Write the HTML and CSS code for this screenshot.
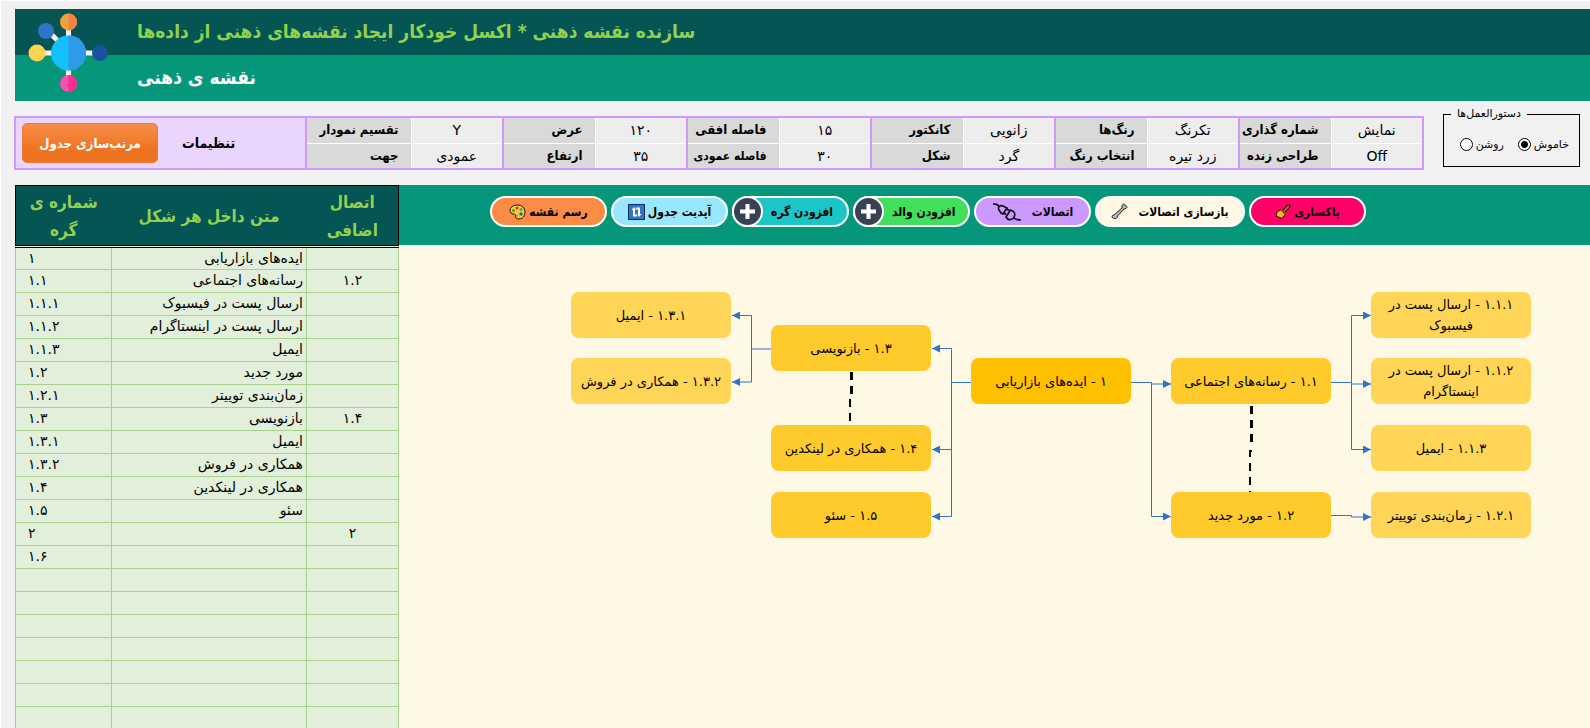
FILE: index.html
```html
<!DOCTYPE html>
<html lang="fa">
<head>
<meta charset="utf-8">
<title>نقشه ی ذهنی</title>
<link rel="stylesheet" href="styles.css">
</head>
<body>
<div class="sheet">
  <header class="banner">
    <svg class="logo" width="80" height="80" viewBox="0 0 80 80" aria-hidden="true">
      <path d="M40.500 10V70M12 40H72M20 18L34 32" stroke="#f2f2f2" stroke-width="5" fill="none"/>
      <circle cx="40.500" cy="40" r="17.500" fill="#16c0fc"/>
      <path d="M40.500 22.500a17.500 17.500 0 0 1 0 35z" fill="#2e9be8"/>
      <circle cx="40.500" cy="9" r="8.500" fill="#f0a23a"/>
      <path d="M40.500 .5a8.500 8.500 0 0 1 0 17z" fill="#f58442"/>
      <circle cx="18" cy="18" r="8" fill="#3173c6"/>
      <circle cx="9" cy="40" r="8.500" fill="#ffd34f"/>
      <circle cx="72" cy="40" r="8" fill="#17549f"/>
      <circle cx="40.500" cy="70.500" r="8.500" fill="#f84fb4"/>
      <path d="M40.500 62a8.500 8.500 0 0 1 0 17z" fill="#fb2d92"/>
    </svg>
    <h1 class="banner-title" dir="rtl">سازنده نقشه ذهنی * اکسل خودکار ایجاد نقشه‌های ذهنی از داده‌ها</h1>
    <h2 class="banner-subtitle" dir="rtl">نقشه ی ذهنی</h2>
  </header>

  <section class="options">
    <div class="settings-wrap">
      <table class="settings">
        <colgroup>
          <col class="col-main"><col class="col-wide"><col><col><col><col><col><col><col><col><col><col><col>
        </colgroup>
        <tr>
          <td class="settings-main" rowspan="2">
            <div class="settings-head">
              <button class="sort-button" type="button" dir="rtl">مرتب‌سازی جدول</button>
              <strong>تنظیمات</strong>
            </div>
          </td>
          <th>تقسیم نمودار</th><td>Y</td>
          <th>عرض</th><td>۱۲۰</td>
          <th>فاصله افقی</th><td>۱۵</td>
          <th>کانکتور</th><td>زانویی</td>
          <th>رنگ‌ها</th><td>تکرنگ</td>
          <th>شماره گذاری</th><td>نمایش</td>
        </tr>
        <tr>
          <th>جهت</th><td>عمودی</td>
          <th>ارتفاع</th><td>۳۵</td>
          <th class="compact">فاصله عمودی</th><td>۳۰</td>
          <th>شکل</th><td>گرد</td>
          <th>انتخاب رنگ</th><td>زرد تیره</td>
          <th>طراحی زنده</th><td>Off</td>
        </tr>
      </table>
    </div>
    <fieldset class="guides" dir="rtl">
      <legend>دستورالعمل‌ها</legend>
      <label class="radio">خاموش<input type="radio" name="guides" checked></label>
      <label class="radio">روشن<input type="radio" name="guides"></label>
    </fieldset>
  </section>

  <main class="work">
    <table class="data">
      <colgroup><col class="data-id"><col class="data-text"><col class="data-link"></colgroup>
      <thead>
        <tr><th dir="rtl">شماره ی<br>گره</th><th dir="rtl">متن داخل هر شکل</th><th dir="rtl">اتصال<br>اضافی</th></tr>
      </thead>
      <tbody>
        <tr><td>۱</td><td>ایده‌های بازاریابی</td><td></td></tr>
        <tr><td>۱.۱</td><td>رسانه‌های اجتماعی</td><td>۱.۲</td></tr>
        <tr><td>۱.۱.۱</td><td>ارسال پست در فیسبوک</td><td></td></tr>
        <tr><td>۱.۱.۲</td><td>ارسال پست در اینستاگرام</td><td></td></tr>
        <tr><td>۱.۱.۳</td><td>ایمیل</td><td></td></tr>
        <tr><td>۱.۲</td><td>مورد جدید</td><td></td></tr>
        <tr><td>۱.۲.۱</td><td>زمان‌بندی توییتر</td><td></td></tr>
        <tr><td>۱.۳</td><td>بازنویسی</td><td>۱.۴</td></tr>
        <tr><td>۱.۳.۱</td><td>ایمیل</td><td></td></tr>
        <tr><td>۱.۳.۲</td><td>همکاری در فروش</td><td></td></tr>
        <tr><td>۱.۴</td><td>همکاری در لینکدین</td><td></td></tr>
        <tr><td>۱.۵</td><td>سئو</td><td></td></tr>
        <tr><td>۲</td><td></td><td>۲</td></tr>
        <tr><td>۱.۶</td><td></td><td></td></tr>
        <tr><td></td><td></td><td></td></tr>
        <tr><td></td><td></td><td></td></tr>
        <tr><td></td><td></td><td></td></tr>
        <tr><td></td><td></td><td></td></tr>
        <tr><td></td><td></td><td></td></tr>
        <tr><td></td><td></td><td></td></tr>
        <tr><td></td><td></td><td></td></tr>
      </tbody>
    </table>

    <section class="map">
      <nav class="toolbar">
        <button class="pill pill-draw" type="button">
          <svg width="17" height="16" viewBox="0 0 17 16" aria-hidden="true"><path d="M8.500 1C4 1 1 3.500 1 6.500c0 2 1.500 3.500 3.500 3.500 1.500 0 2 .8 2 2 0 2 1.500 3 3.500 3 3.500 0 6-3 6-7s-3-7-7.500-7z" fill="#f8c93a" stroke="#15120a"/><circle cx="8" cy="4" r="1.500" fill="#e3342c"/><circle cx="4.500" cy="6.500" r="1.500" fill="#38a846"/><circle cx="12" cy="5.500" r="1.500" fill="#36b04a"/><circle cx="12" cy="10" r="1.700" fill="#2d61c9"/><circle cx="8.500" cy="11.500" r="1.200" fill="#fa8a45"/></svg>
          <span>رسم نقشه</span>
        </button>
        <button class="pill pill-update" type="button">
          <svg width="17" height="16" viewBox="0 0 17 16" aria-hidden="true"><rect x=".5" y=".5" width="16" height="15" fill="#2f74c8" stroke="#142c58"/><path d="M6 5v6.500h3M8 4.500h3V11" stroke="#fff" stroke-width="2" fill="none"/><path d="M3.500 6L6 3l2 3zM9 10l2 3 2.500-3z" fill="#fff"/></svg>
          <span>آپدیت جدول</span>
        </button>
        <button class="pill pill-node" type="button">
          <svg width="31" height="31" viewBox="0 0 31 31" aria-hidden="true"><circle cx="15.500" cy="15.500" r="14.500" fill="#3a4152" stroke="#fff" stroke-width="2"/><path d="M15.500 8v15M8 15.500h15" stroke="#fff" stroke-width="4"/></svg>
          <span>افزودن گره</span>
        </button>
        <button class="pill pill-parent" type="button">
          <svg width="31" height="31" viewBox="0 0 31 31" aria-hidden="true"><circle cx="15.500" cy="15.500" r="14.500" fill="#3a4152" stroke="#fff" stroke-width="2"/><path d="M15.500 8v15M8 15.500h15" stroke="#fff" stroke-width="4"/></svg>
          <span>افزودن والد</span>
        </button>
        <button class="pill pill-connect" type="button">
          <svg width="30" height="20" viewBox="0 0 30 20" aria-hidden="true"><path d="M1 2c3 0 5 0 6 3M7 8c-1.500-3 1-5 4-4l4 2-4 6c-2-.5-3-2-4-4zM15 7l2 1.500M12 11l2 1.500M18.500 8l-4.500 7c1.500 3 5 3.500 7 1.500s2.500-5 .5-7zM22 16c2 2 4 2 7 2" fill="none" stroke="#15101f" stroke-width="1.700"/></svg>
          <span>اتصالات</span>
        </button>
        <button class="pill pill-rebuild" type="button">
          <svg width="17" height="17" viewBox="0 0 17 17" aria-hidden="true"><path d="M11 2.500c1-2 3-2 3 0 2 0 2.500 2 1 3l-2 .5-6.500 7c0 2-2 3.500-3 2.500C1.500 15.500.5 14 1.500 12.500l2-1L11 5z" fill="#b9b9b9" stroke="#1b1b1b"/></svg>
          <span>بازسازی اتصالات</span>
        </button>
        <button class="pill pill-clear" type="button">
          <svg width="16" height="16" viewBox="0 0 16 16" aria-hidden="true"><path d="M14 2L9 7" stroke="#2a1606" stroke-width="3.500" stroke-linecap="round"/><path d="M14 2L9 7" stroke="#d6833a" stroke-width="1.500"/><path d="M6 5.500L10.500 10 7 14.500 1 12l1-4z" fill="#f4b13c" stroke="#2a1606"/><path d="M6 5.500l4.500 4.500" stroke="#8b4d1c" stroke-width="2"/></svg>
          <span>پاکسازی</span>
        </button>
      </nav>

      <div class="canvas">
        <svg class="wires" width="1191" height="483" viewBox="0 0 1191 483" aria-hidden="true">
          <defs><marker id="arrow" markerWidth="8" markerHeight="8" refX="8" refY="4" orient="auto" markerUnits="userSpaceOnUse"><path d="M0 0l8 4-8 4z" fill="#3173c6"/></marker></defs>
          <g class="wire">
            <path d="M732 137.500h20.500v1.500H772"/>
            <path d="M752.500 137.500V271.500H772"/>
            <path d="M932 137.500h20.500v1.500H972"/>
            <path d="M952.500 137.500V70.500H972"/>
            <path d="M952.500 137.500V204.500H972"/>
            <path d="M932 270.500h20.500v1.500H972"/>
            <path d="M572 137.500H552.500V103.500H533"/>
            <path d="M552.500 137.500V204.500H533"/>
            <path d="M552.500 137.500V271.500H533"/>
            <path d="M372 104H352.500V70.500H333"/>
            <path d="M352.500 104V137H333"/>
          </g>
          <path class="extra" d="M452.500 127v24"/>
          <path class="extra extra-thin" d="M451 154v28"/>
          <path class="extra" d="M852.500 161v38"/>
          <path class="extra extra-thin" d="M853 206H851v44"/>
        </svg>
        <div class="node level-1 x3 y3">۱ - ایده‌های بازاریابی</div>
        <div class="node level-2 x4 y3">۱.۱ - رسانه‌های اجتماعی</div>
        <div class="node level-2 x4 y5">۱.۲ - مورد جدید</div>
        <div class="node level-2 x2 y2">۱.۳ - بازنویسی</div>
        <div class="node level-2 x2 y4">۱.۴ - همکاری در لینکدین</div>
        <div class="node level-2 x2 y5">۱.۵ - سئو</div>
        <div class="node level-3 x5 y1">۱.۱.۱ - ارسال پست در<br>فیسبوک</div>
        <div class="node level-3 x5 y3">۱.۱.۲ - ارسال پست در<br>اینستاگرام</div>
        <div class="node level-3 x5 y4">۱.۱.۳ - ایمیل</div>
        <div class="node level-3 x5 y5">۱.۲.۱ - زمان‌بندی توییتر</div>
        <div class="node level-3 x1 y1">۱.۳.۱ - ایمیل</div>
        <div class="node level-3 x1 y3">۱.۳.۲ - همکاری در فروش</div>
      </div>
    </section>
  </main>
</div>
</body>
</html>
```

FILE: styles.css
```css
* { box-sizing: border-box; }

body {
  margin: 0;
  height: 100vh;
  overflow: hidden;
  background: #fff;
  color: #000;
  font-family: "DejaVu Sans", sans-serif;
  font-size: 14px;
}

h1, h2, th, strong, button {
  font-family: "DejaVu Sans Condensed", "DejaVu Sans", sans-serif;
  font-weight: bold;
}

button { color: inherit; }

.sheet {
  height: 100%;
  margin: 1px 0 0 1px;
  padding: 8px 0 0 14px;
  display: flex;
  flex-direction: column;
  background: #f1f1f1;
}

.banner { position: relative; flex: none; }

.logo { position: absolute; left: 13px; top: 4px; }

.banner-title,
.banner-subtitle {
  margin: 0;
  height: 46px;
  padding-left: 122px;
  font-size: 19px;
  line-height: 44px;
  text-align: left;
}

.banner-title { background: #055555; color: #92d050; }
.banner-subtitle { background: #06977a; color: #fff; }

.options {
  flex: none;
  display: flex;
  align-items: flex-start;
  gap: 19px;
  margin: 12px 10px 0 -1px;
}

.settings-wrap { flex: 1; min-width: 0; margin-top: 3px; }

.settings {
  width: 100%;
  table-layout: fixed;
  border-collapse: collapse;
  border: 2px solid #cc99ff;
}

.col-main { width: 291px; }
.col-wide { width: 105px; }

.settings th,
.settings td {
  height: 26px;
  padding: 0;
  border-bottom: 1px solid #fff;
  line-height: 20px;
  white-space: nowrap;
}

.settings th {
  padding-right: 12px;
  background: #d9d9d9;
  border-left: 2px solid #cc99ff;
  font-size: 13px;
  text-align: right;
}

.settings .compact { font-size: 12px; }

.settings td {
  background: #ededed;
  border-left: 1px solid #fff;
  text-align: center;
}

.settings tr:last-child > * { border-bottom: 2px solid #cc99ff; }

.settings .settings-main {
  background: #ead5ff;
  border-left: 2px solid #cc99ff;
  border-bottom: 2px solid #cc99ff;
}

.settings-head {
  display: flex;
  align-items: center;
  gap: 24px;
  padding-left: 6px;
}

.sort-button {
  width: 136px;
  height: 40px;
  border: 1px solid #ee7a2a;
  border-radius: 5px;
  background: linear-gradient(#f78d49, #ee7320 70%, #ee7320);
  color: #fff;
  font-size: 13px;
}

.guides {
  flex: none;
  width: 137px;
  height: 60px;
  margin: -6px 0 0;
  padding: 11px 10px 0 0;
  display: flex;
  gap: 14px;
  border: 1px solid #000;
  font-size: 11px;
}

.guides legend {
  margin-right: 42px;
  padding: 0 6px;
  line-height: 14px;
}

.radio { display: flex; align-items: center; gap: 3px; height: 24px; }

.radio input {
  appearance: none;
  width: 13px;
  height: 13px;
  margin: 0;
  border: 1px solid #000;
  border-radius: 50%;
  background: #fff;
}

.radio input:checked { background: radial-gradient(circle, #000 3px, #fff 4px); }

.work {
  flex: 1;
  min-height: 0;
  display: flex;
  align-items: stretch;
  margin-top: 15px;
}

.data {
  flex: none;
  align-self: flex-start;
  width: 383px;
  table-layout: fixed;
  border-collapse: collapse;
  background: #e2efda;
}

.data-id { width: 96px; }
.data-text { width: 195px; }
.data-link { width: 92px; }

.data thead { border: 1px solid #000; }

.data th {
  height: 61px;
  padding: 0;
  background: #055555;
  background-clip: padding-box;
  border-bottom: 3px double #000;
  color: #92d050;
  font-size: 17px;
  line-height: 28px;
}

.data td {
  height: 23px;
  padding: 0;
  border: 1px solid #a9d08e;
  line-height: 20px;
  text-align: center;
  vertical-align: top;
  white-space: nowrap;
}

.data td:first-child { padding-left: 12px; text-align: left; }
.data td:nth-child(2) { padding-right: 3px; text-align: right; }

.map {
  flex: 1;
  min-width: 0;
  display: flex;
  flex-direction: column;
}

.toolbar {
  flex: none;
  height: 60px;
  padding: 11px 0 0 91px;
  display: flex;
  align-items: flex-start;
  gap: 4px;
  background: #06977a;
}

.pill {
  flex: none;
  width: 117px;
  height: 31px;
  padding: 0;
  display: flex;
  align-items: center;
  justify-content: center;
  gap: 3px;
  border: 2px solid #fff;
  border-radius: 16px;
  font-size: 12px;
  line-height: 20px;
  white-space: nowrap;
}

.pill-draw { background: #fa8c46; }
.pill-update { background: #99e6ff; }
.pill-node { background: #1cc6c6; }
.pill-parent { background: #42df5c; }
.pill-connect { background: #cc99ff; gap: 10px; }
.pill-rebuild { width: 150px; background: #fff8e5; gap: 10px; }
.pill-clear { background: #ff0066; }

.pill-node,
.pill-parent { justify-content: flex-start; gap: 8px; }
.pill-node svg,
.pill-parent svg { flex: none; margin-left: -2px; }

.canvas {
  position: relative;
  flex: 1;
  background: #fff8e5;
  overflow: hidden;
}

.wires { position: absolute; left: 0; top: 0; }
.wire path { fill: none; stroke: #3173c6; marker-end: url(#arrow); }
.extra { fill: none; stroke: #000; stroke-width: 3; stroke-dasharray: 8 6; }
.extra-thin { stroke-width: 2; }

.node {
  position: absolute;
  width: 160px;
  height: 46px;
  display: flex;
  align-items: center;
  justify-content: center;
  border-radius: 8px;
  direction: rtl;
  font-size: 13px;
  line-height: 21px;
  text-align: center;
  white-space: nowrap;
}

.level-1 { background: #ffc000; }
.level-2 { background: #ffca2b; }
.level-3 { background: #ffd557; }

.x1 { left: 172px; }
.x2 { left: 372px; }
.x3 { left: 572px; }
.x4 { left: 772px; }
.x5 { left: 972px; }
.y1 { top: 47px; }
.y2 { top: 80px; }
.y3 { top: 113px; }
.y4 { top: 180px; }
.y5 { top: 247px; }
```
